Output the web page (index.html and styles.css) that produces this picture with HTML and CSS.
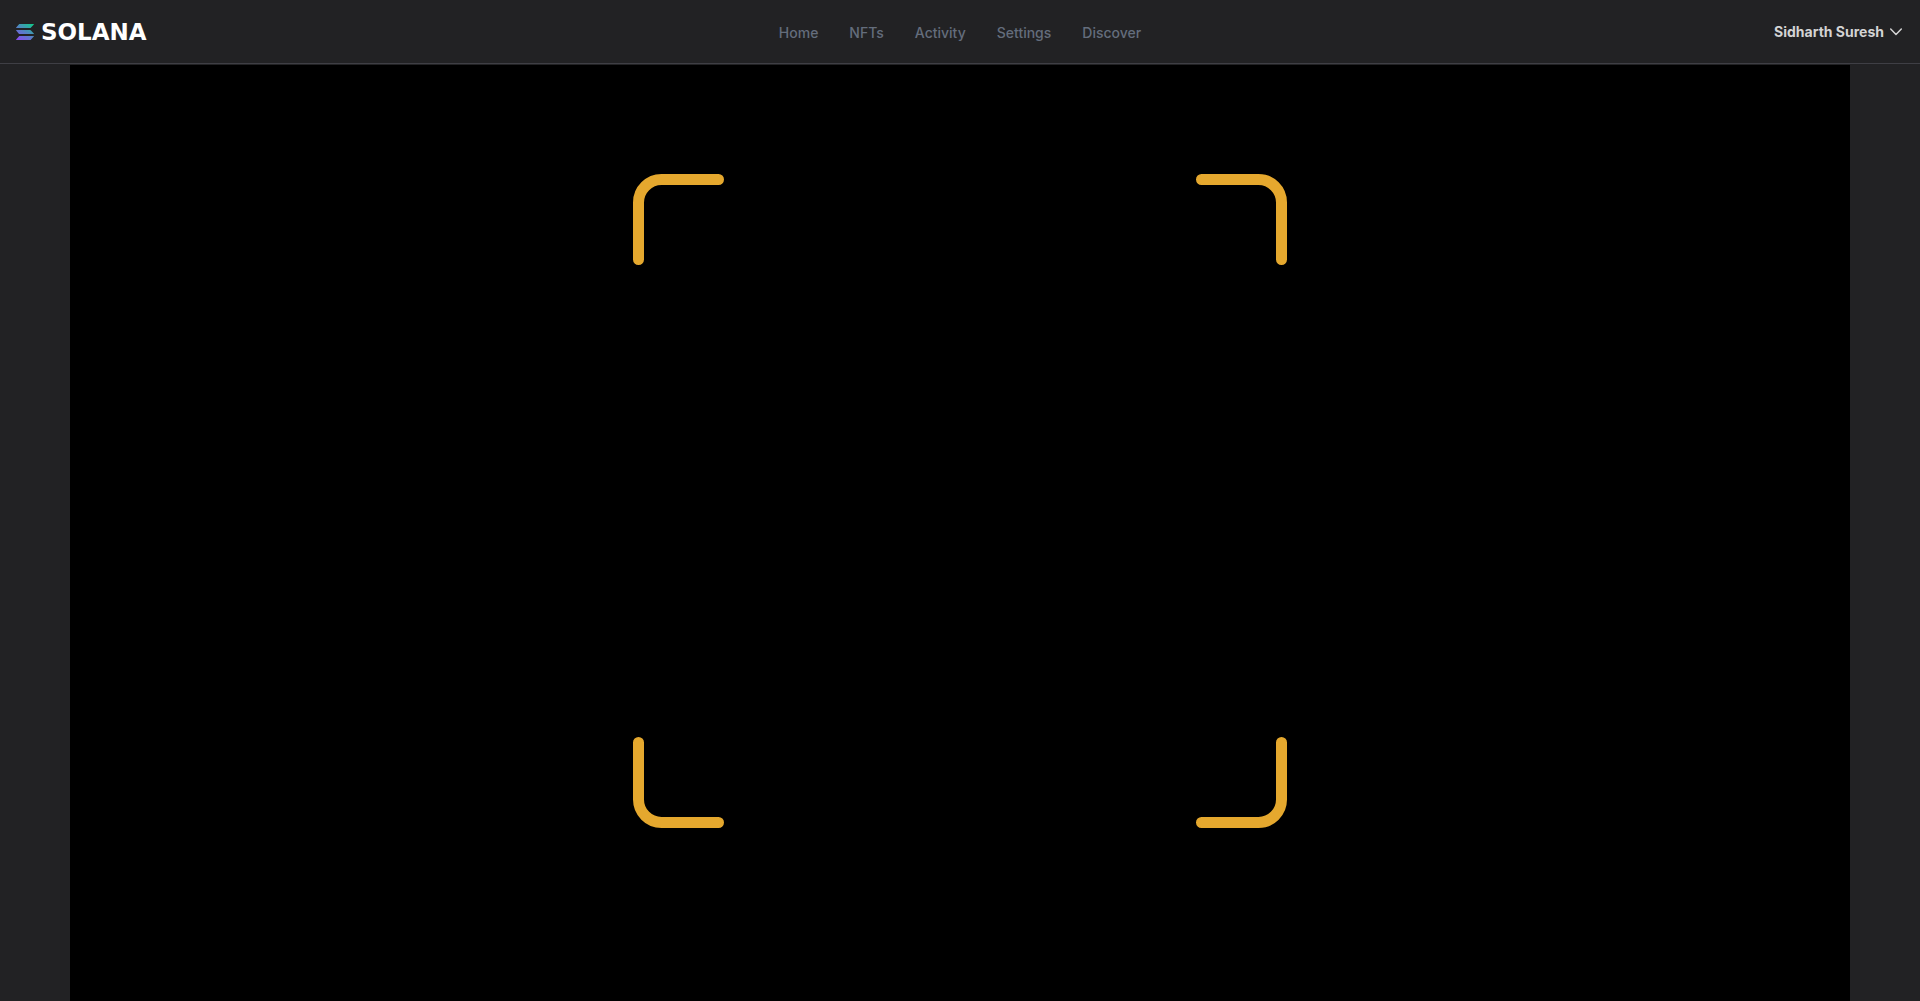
FILE: index.html
```html
<!DOCTYPE html>
<html lang="en">
<head>
  <meta charset="utf-8">
  <meta name="viewport" content="width=device-width, initial-scale=1">
  <title>Solana</title>
  <link rel="stylesheet" href="styles.css">
</head>
<body>
  <header class="topbar">
    <a class="brand" href="#">
      <svg class="brand-mark" viewBox="0 0 18 16" aria-hidden="true">
        <defs>
          <linearGradient id="mark" gradientUnits="userSpaceOnUse" x1="3" y1="17" x2="15" y2="-1">
            <stop offset="0" stop-color="#8a4af0"/>
            <stop offset="0.5" stop-color="#5482c4"/>
            <stop offset="1" stop-color="#12c98a"/>
          </linearGradient>
        </defs>
        <path fill="url(#mark)" d="M3.3 0H17.6Q18.2 0 17.8 .5L15 3.5Q14.7 4 14.2 4H.4Q-.2 4 .2 3.5L2.8 .4Q3 0 3.3 0ZM.4 6H14.2Q14.7 6 15 6.4L17.8 9.5Q18.2 10 17.6 10H3.3Q3 10 2.8 9.7L.2 6.5Q-.2 6 .4 6ZM3.3 12H17.6Q18.2 12 17.8 12.5L15 15.5Q14.7 16 14.2 16H.4Q-.2 16 .2 15.5L2.8 12.4Q3 12 3.3 12Z"/>
      </svg>
      <span>SOLANA</span>
    </a>
    <nav class="nav">
      <a href="#">Home</a>
      <a href="#">NFTs</a>
      <a href="#">Activity</a>
      <a href="#">Settings</a>
      <a href="#">Discover</a>
    </nav>
    <button class="account" type="button">
      Sidharth Suresh
      <svg class="chevron" viewBox="0 0 12 8" aria-hidden="true"><path d="M.7 1L6 6.5L11.3 1"/></svg>
    </button>
  </header>
  <main class="scanner">
    <svg class="viewfinder" viewBox="0 0 654 654" role="img" aria-label="Scan area">
      <path d="M5.5 85.500V28.500A23 23 0 0 1 28.500 5.500H85.500M568.500 5.500H625.500A23 23 0 0 1 648.500 28.500V85.500M648.500 568.500V625.500A23 23 0 0 1 625.500 648.500H568.500M85.500 648.500H28.500A23 23 0 0 1 5.500 625.500V568.500"/>
    </svg>
  </main>
</body>
</html>
```
FILE: styles.css
```css
* {
  box-sizing: border-box;
}

body {
  display: flex;
  flex-direction: column;
  min-height: 100vh;
  margin: 0;
  background: #222224;
  font-family: "Inter", "Liberation Sans", sans-serif;
  font-size: 14px;
  line-height: 20px;
}

.topbar {
  display: grid;
  grid-template-columns: 1fr auto 1fr;
  align-items: center;
  height: 64px;
  margin-bottom: 1px;
  padding: 0 16px;
  border-bottom: 1px solid #3f3f45;
}

.brand {
  display: flex;
  align-items: center;
  justify-self: start;
  gap: 7px;
  color: #fff;
  font-family: "DejaVu Sans", sans-serif;
  font-size: 23px;
  font-weight: 700;
  text-decoration: none;
}

.brand-mark {
  width: 18px;
  height: 16px;
}

.nav {
  display: flex;
  gap: 31px;
  padding-top: 2px;
}

.nav a {
  color: #646d7c;
  font-weight: 500;
  text-decoration: none;
}

.account {
  display: flex;
  align-items: center;
  justify-self: end;
  gap: 6px;
  padding: 0 2px;
  border: 0;
  background: none;
  color: #d4d4d4;
  font: inherit;
  font-weight: 700;
}

.chevron {
  width: 12px;
  height: 8px;
  fill: none;
  stroke: #d4d4d4;
  stroke-width: 1.5;
  stroke-linecap: round;
  stroke-linejoin: round;
}

.scanner {
  flex: 1;
  display: flex;
  justify-content: center;
  align-items: flex-start;
  margin: 0 70px;
  padding: 109px 0 64px;
  background: #000;
}

.viewfinder {
  width: 37%;
  max-width: 654px;
  fill: none;
  stroke: #e5a82e;
  stroke-width: 11;
  stroke-linecap: round;
}
```
